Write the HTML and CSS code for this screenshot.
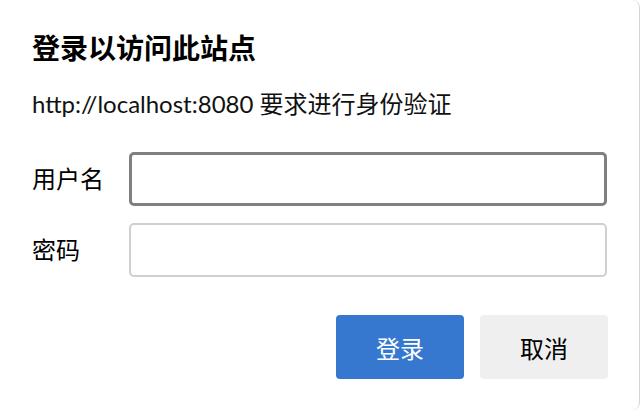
FILE: index.html
```html
<!DOCTYPE html>
<html lang="zh-CN">
<head>
<meta charset="utf-8">
<title>登录以访问此站点</title>
<link rel="stylesheet" href="styles.css">
</head>
<body>
<div class="dialog">
  <h1 class="title">登录以访问此站点</h1>
  <p class="sub">http://localhost:8080 要求进行身份验证</p>
  <form class="form">
    <label class="label" for="u">用户名</label>
    <input class="field focused" id="u" type="text">
    <label class="label" for="p">密码</label>
    <input class="field" id="p" type="password">
  </form>
  <div class="actions">
    <button class="btn primary" type="button">登录</button>
    <button class="btn" type="button">取消</button>
  </div>
</div>
</body>
</html>
```
FILE: styles.css
```css
html, body {
  margin: 0;
  padding: 0;
  background: #ffffff;
}
body {
  font-family: Lato, "Noto Sans CJK SC", sans-serif;
  color: #000;
}
.dialog {
  width: 640px;
  height: 410px;
  box-sizing: border-box;
  padding: 30px 32px 0 32px;
  border-right: 1px solid #d4d4d4;
  border-radius: 0 8px 8px 0;
  background: #fff;
  display: flex;
  flex-direction: column;
}
.title {
  margin: 0;
  font-size: 28px;
  line-height: 36px;
  font-weight: 700;
}
.sub {
  margin: 22px 0 0;
  font-size: 24px;
  line-height: 32px;
  color: #111;
}
.form {
  margin-top: 32px;
  display: grid;
  grid-template-columns: 97px 1fr;
  grid-template-rows: 54px 54px;
  row-gap: 17px;
  align-items: center;
}
.label {
  font-size: 24px;
  line-height: 32px;
}
.field {
  height: 54px;
  box-sizing: border-box;
  width: 100%;
  margin: 0;
  border: 2px solid #d0d0d0;
  border-radius: 5px;
  background: #fff;
  outline: none;
}
.field.focused {
  border: 3px solid #808080;
}
.actions {
  margin-top: 38px;
  display: flex;
  justify-content: flex-end;
  gap: 16px;
  margin-right: -1px;
}
.btn {
  width: 128px;
  height: 64px;
  border: none;
  border-radius: 4px;
  background: #efefef;
  color: #000;
  font-family: Lato, "Noto Sans CJK SC", sans-serif;
  font-size: 24px;
  padding: 0;
}
.btn.primary {
  background: #3678cf;
  color: #fff;
}
```
